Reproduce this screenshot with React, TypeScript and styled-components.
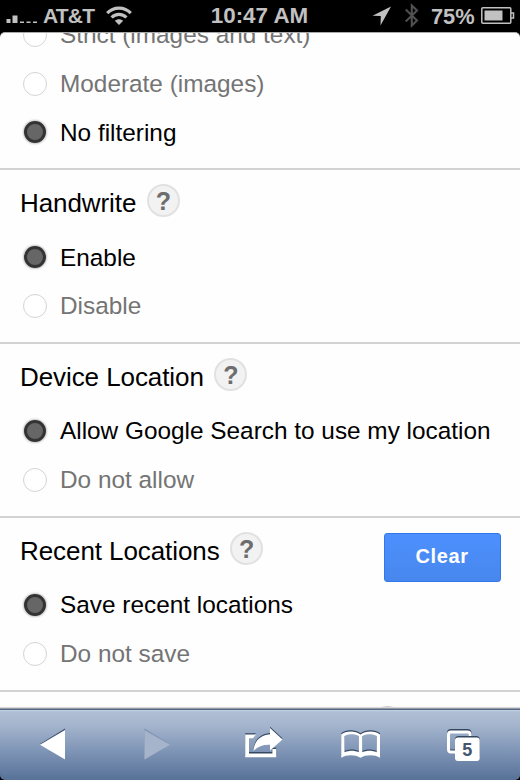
import React from "react";
import styled, { createGlobalStyle, css } from "styled-components";

const Global = createGlobalStyle`
  * { box-sizing: border-box; }
  body { margin: 0; background: #000; }
`;

const Phone = styled.div`
  width: 520px;
  height: 780px;
  display: flex;
  flex-direction: column;
  overflow: hidden;
  background: #000;
  font-family: "Liberation Sans", Arial, sans-serif;
`;

const StatusBar = styled.header`
  height: 32px;
  flex: none;
  display: grid;
  grid-template-columns: 200px 119px 1fr;
  align-items: center;
  color: #c1c1c1;
  font-size: 21.5px;
  font-weight: bold;
  line-height: 32px;
  white-space: nowrap;
`;

const Carrier = styled.div`
  display: flex;
  align-items: center;
  height: 32px;
  padding-left: 6px;
  svg { display: block; flex: none; }
`;

const CarrierName = styled.span`
  width: 63px;
  font-size: 21px;
  line-height: 24px;
  letter-spacing: -0.8px;
`;

const Time = styled.div`
  text-align: center;
  font-size: 22.4px;
  line-height: 24px;
`;

const Indicators = styled.div`
  display: flex;
  align-items: center;
  height: 32px;
  padding-left: 53px;
  svg { display: block; flex: none; }
`;

const Percent = styled.span`
  width: 50px;
  padding-top: 1px;
  font-size: 21.8px;
  line-height: 24px;
`;

const Page = styled.main`
  height: 677px;
  flex: none;
  overflow: hidden;
  background: #fefefe;
  border-top: 1px solid #aaa;
  border-radius: 5px 5px 0 0;
`;

const Section = styled.section<{ $first?: boolean }>`
  height: 173.9px;
  border-top: 2px solid #d2d2d2;
  ${(p) =>
    p.$first &&
    css`
      height: 157.5px;
      margin-top: -22.5px;
      border-top: 0;
    `}
`;

const Heading = styled.div`
  height: 62.7px;
  padding: 0 19.5px 0 20px;
  display: flex;
  align-items: center;
  color: #000;
`;

const Title = styled.h2`
  margin: 4px 0 0;
  font-size: 26px;
  font-weight: normal;
  line-height: 32px;
  letter-spacing: -0.08px;
  white-space: nowrap;
`;

const Help = styled.span`
  display: block;
  width: 33px;
  height: 33px;
  margin: -1px 0 0 10.5px;
  border: 2px solid #e1e1e1;
  border-radius: 50%;
  background: #f2f2f2;
  color: #6d6d6d;
  font-size: 25px;
  font-weight: bold;
  line-height: 30px;
  text-align: center;
`;

const ClearButton = styled.button`
  width: 117px;
  height: 49px;
  margin: 16px 0 0 auto;
  padding: 0 0 1px;
  border: 1px solid #3079ed;
  border-radius: 3px;
  background: linear-gradient(#4d90fe, #4787ed);
  color: #fff;
  font: bold 20px "Liberation Sans", Arial, sans-serif;
  letter-spacing: 0.6px;
`;

const Option = styled.label<{ $on?: boolean }>`
  height: 48.75px;
  padding-left: 23px;
  display: flex;
  align-items: center;
  gap: 13px;
  color: ${(p) => (p.$on ? "#000" : "#747474")};
  font-size: 24.375px;
  line-height: 30px;
  white-space: nowrap;
`;

const OptionText = styled.span`
  padding-top: 1px;
`;

const Radio = styled.span<{ $on?: boolean }>`
  width: 24px;
  height: 24px;
  flex: none;
  border: 1.5px solid #d4d4d4;
  border-radius: 50%;
  background: #fff;
  ${(p) =>
    p.$on &&
    css`
      width: 22px;
      height: 22px;
      margin: 0 1px;
      border: 3px solid #333;
      background: #666;
      box-shadow: 0 0 2px 1px #c4c4c4;
    `}
`;

const Toolbar = styled.nav`
  height: 71px;
  flex: none;
  display: grid;
  grid-template-columns: repeat(5, 104px);
  align-items: center;
  border-top: 1px solid #53698a;
  box-shadow: 0 -1px 0 #92989e, 0 -2px 1px #d5d5d5;
  border-radius: 0 0 5px 5px;
  background: linear-gradient(#c5d2e3 0, #afbed4 2px, #a6b6ce 14px, #8096b7 40px, #577197 70px);
  z-index: 1;
  svg { display: block; }
`;

const Partial = styled.div`
  padding: 15px 0 0 360px;
  height: 50px;
  ${Help} { background: #c9c9c9; border-color: #c9c9c9; }
`;

const Choice = ({ on, children }: { on?: boolean; children: React.ReactNode }) => (
  <Option $on={on}>
    <Radio $on={on} />
    <OptionText>{children}</OptionText>
  </Option>
);

const Group = ({ title, on, off, clear }: { title: string; on: string; off: string; clear?: boolean }) => (
  <Section>
    <Heading>
      <Title>{title}</Title>
      <Help>?</Help>
      {clear && <ClearButton>Clear</ClearButton>}
    </Heading>
    <Choice on>{on}</Choice>
    <Choice>{off}</Choice>
  </Section>
);

const Signal = () => (
  <svg width="37" height="32" fill="#c1c1c1">
    <path d="M.5 19h4v4h-4zM6.500 15.500h5V23h-5zM14 21.500h4V23h-4zM20.500 21.500h4V23h-4zM27 21.500h4V23h-4z" />
  </svg>
);

const Wifi = () => (
  <svg width="26" height="32" fill="none" stroke="#c1c1c1" strokeWidth="3.200">
    <path d="M1.200 13.200C7.500 6.300 18.500 6.300 24.800 13.200" />
    <path d="M5.600 17.500C9.700 13.200 16.300 13.200 20.400 17.500" />
    <path d="M13 25l-4.200-4.200c2.200-2.200 6.200-2.200 8.400 0z" fill="#c1c1c1" stroke="none" />
  </svg>
);

const BackIcon = () => (
  <svg width="104" height="70">
    <path d="M65 18.500v31L40 34z" fill="#3d506c" />
    <path d="M65 20v29.500L40 34.700z" fill="#fff" />
  </svg>
);

const ForwardIcon = () => (
  <svg width="104" height="70">
    <path d="M40.500 18.500v31L66 34.300z" fill="#7d91af" />
    <path d="M40.500 20v29.500L66 34.700z" fill="#a5b4ca" />
  </svg>
);

const shareBox = "M48 24.500H37.200v22.800h31V39h-3.800v4.400H41V28.200h4z";
const shareArrow = "M62 18l12.500 11.500L62 40.500v-5.800c-7-.3-12.500 1.600-16.500 6.300C46 31.500 52 25 62 24.300z";
const ShareIcon = () => (
  <svg width="104" height="70">
    <g fill="#35465f" transform="translate(0 -1.300)">
      <path d={shareBox} />
      <path d={shareArrow} />
    </g>
    <path d={shareBox} fill="#fff" />
    <path d={shareArrow} fill="#fff" />
  </svg>
);

const bookPath =
  "M29.200 24.500c4.200-4 14.500-4 19.300 0 4.800-4 15.100-4 19.500 0V47.800c-5-3.300-14.500-3.300-19.500 0-5-3.300-14.300-3.300-19.300 0zM32.500 26v16.300c4.500-2 10-2 14.300 0V26c-3.800-2.500-10.800-2.500-14.300 0zM50.300 26v16.300c4.300-2 9.800-2 14.400 0V26c-3.600-2.500-10.600-2.500-14.400 0z";
const BookIcon = () => (
  <svg width="104" height="70" fillRule="evenodd">
    <path d={bookPath} fill="#35465f" transform="translate(0 -1.300)" />
    <path d={bookPath} fill="#fff" />
  </svg>
);

const TabsIcon = () => (
  <svg width="104" height="70">
    <rect x="32.500" y="20.500" width="21.500" height="20.500" rx="2.500" fill="none" stroke="#35465f" strokeWidth="3" />
    <rect x="32.500" y="22" width="21.500" height="20" rx="2.500" fill="none" stroke="#fff" strokeWidth="3" />
    <rect x="39" y="26" width="24.700" height="23" rx="3.500" fill="#35465f" />
    <rect x="39" y="27.500" width="24.700" height="23.500" rx="3" fill="#fff" />
    <text x="51.200" y="45.500" textAnchor="middle" fill="#44556e" fontSize="18" fontWeight="bold" fontFamily="Liberation Sans, Arial, sans-serif">5</text>
  </svg>
);

export default function App() {
  return (
    <>
      <Global />
      <Phone>
        <StatusBar>
          <Carrier>
            <Signal />
            <CarrierName>AT&amp;T</CarrierName>
            <Wifi />
          </Carrier>
          <Time>10:47 AM</Time>
          <Indicators>
            <svg width="33" height="32">
              <path d="M19 6.500L8.500 25.500 8.800 16 .5 15.700z" fill="#c1c1c1" />
            </svg>
            <svg width="26" height="32" fill="none" stroke="#505050" strokeWidth="2.100">
              <path d="M.7 9.500L12 20.500 6.800 25.500V5.500L12 10.500 .7 21.500" />
            </svg>
            <Percent>75%</Percent>
            <svg width="35" height="32" fill="none" stroke="#c1c1c1" strokeWidth="1.500">
              <rect x=".8" y="7.800" width="29" height="15.400" rx="1" />
              <path d="M30 13h2.500v5H30" />
              <path d="M3.500 10.500h18v10h-18z" fill="#c1c1c1" stroke="none" />
            </svg>
          </Indicators>
        </StatusBar>
        <Page>
          <Section $first>
            <Choice>Strict (images and text)</Choice>
            <Choice>Moderate (images)</Choice>
            <Choice on>No filtering</Choice>
          </Section>
          <Group title="Handwrite" on="Enable" off="Disable" />
          <Group title="Device Location" on="Allow Google Search to use my location" off="Do not allow" />
          <Group title="Recent Locations" on="Save recent locations" off="Do not save" clear />
          <Section>
            <Partial>
              <Help />
            </Partial>
          </Section>
        </Page>
        <Toolbar>
          <BackIcon />
          <ForwardIcon />
          <ShareIcon />
          <BookIcon />
          <TabsIcon />
        </Toolbar>
      </Phone>
    </>
  );
}
